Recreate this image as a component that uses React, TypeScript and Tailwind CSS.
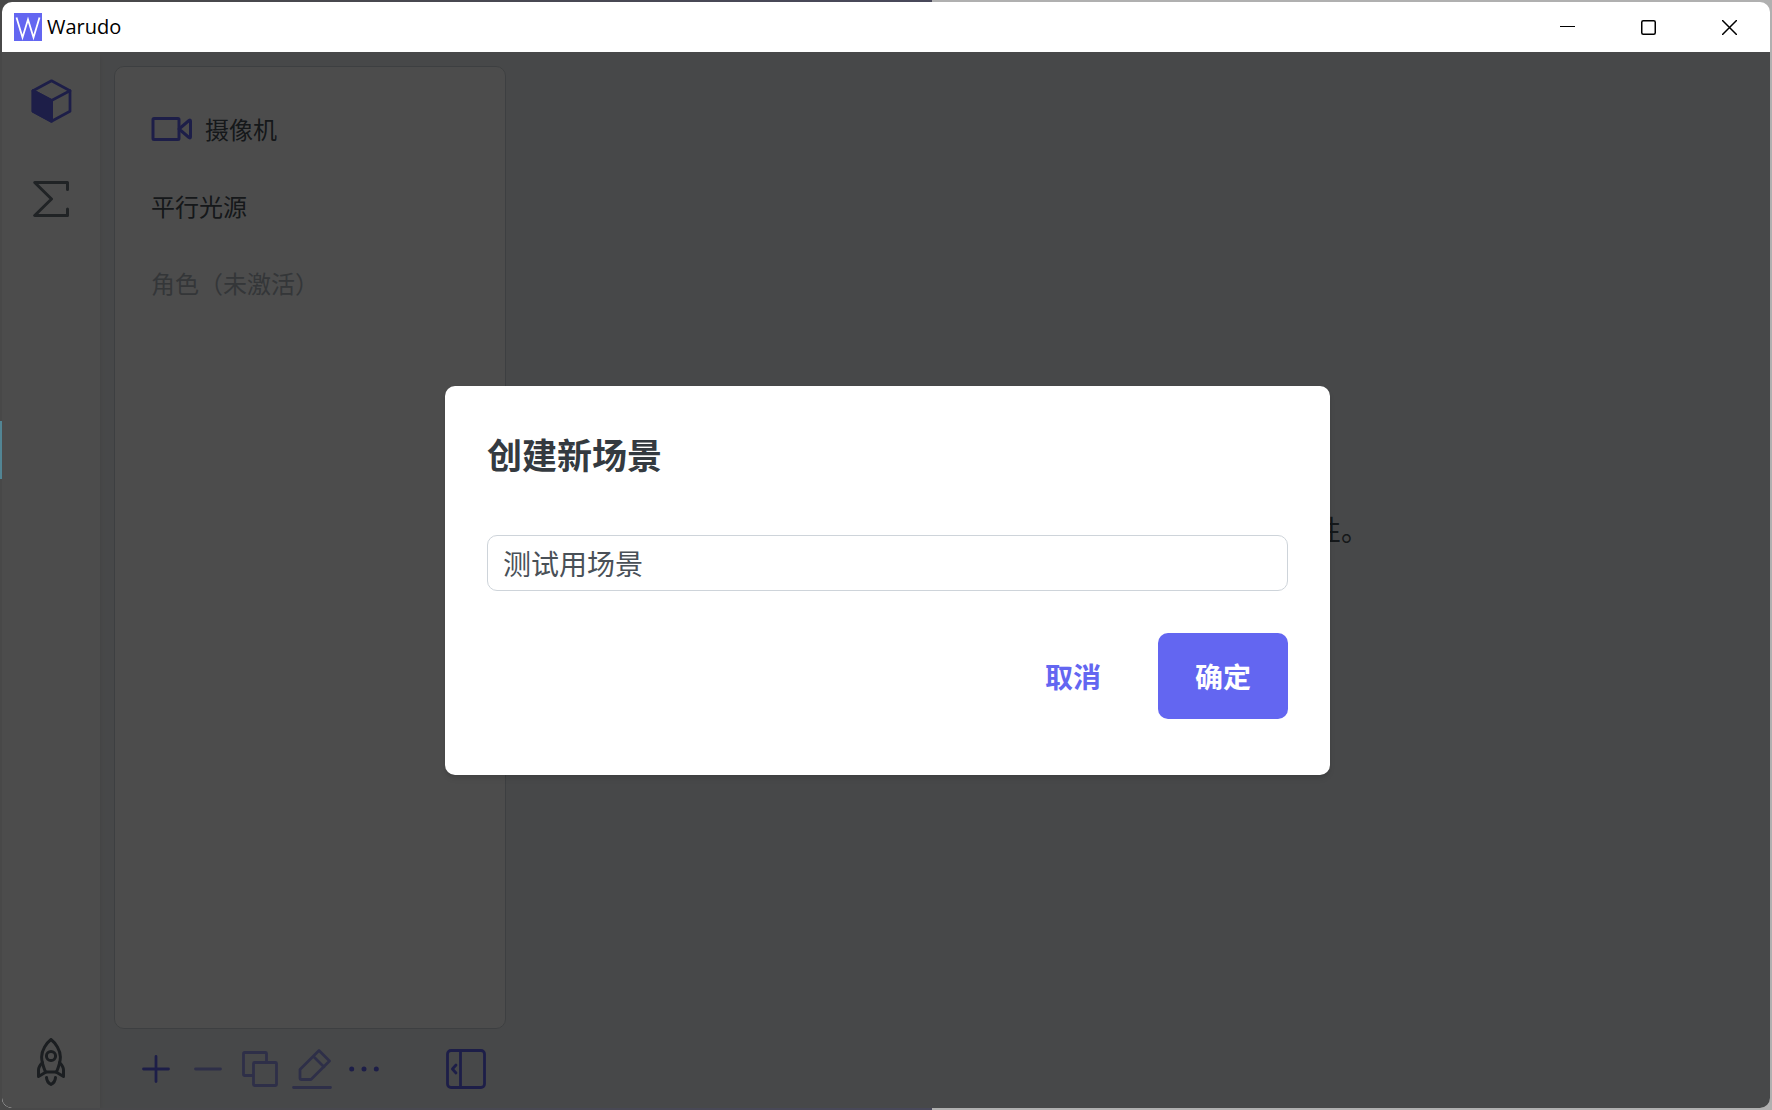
import { useState, type ReactNode } from "react";

function Icon({ box, className, width = 2, children }: { box: string; className: string; width?: number; children: ReactNode }) {
  return (
    <svg viewBox={box} className={className} fill="none" stroke="currentColor" strokeWidth={width} strokeLinecap="round" strokeLinejoin="round" aria-hidden="true">
      {children}
    </svg>
  );
}

function TitleBar() {
  return (
    <header className="flex h-[50px] shrink-0 items-center bg-white pl-3 text-black">
      <svg viewBox="0 0 28 28" className="size-7" aria-hidden="true">
        <rect width="28" height="28" fill="#6366f1" />
        <path d="M2.5 4.5 8.5 24.5 14 6.5 19.5 24.5 25.5 4.5" fill="none" stroke="#fff" strokeWidth="1.8" />
      </svg>
      <h1 className="ml-[5px] flex-1 font-['Open_Sans','Noto_Sans',sans-serif] text-xl">Warudo</h1>
      <button type="button" aria-label="最小化" className="flex h-full w-[81px] items-center justify-center">
        <Icon box="0 0 15 15" className="size-[15px]" width={1.2}><path d="M0 6.5h15" /></Icon>
      </button>
      <button type="button" aria-label="最大化" className="flex h-full w-[81px] items-center justify-center">
        <Icon box="0 0 15 15" className="size-[15px]" width={1.5}><rect x=".75" y=".75" width="13.5" height="13.5" rx="1.5" /></Icon>
      </button>
      <button type="button" aria-label="关闭" className="flex h-full w-[81px] items-center justify-center">
        <Icon box="0 0 15 15" className="size-[15px]" width={1.5}><path d="M.5.5l14 14M14.5.5l-14 14" /></Icon>
      </button>
    </header>
  );
}

function Sidebar() {
  return (
    <nav className="flex w-[98px] shrink-0 flex-col items-center bg-white pt-[27px] pb-[22px] text-[#6c757d] shadow-md">
      <button type="button" aria-label="资源" className="text-[#6366f1]">
        <Icon box="0 0 42 44" className="h-11 w-[42px]" width={2.8}>
          <path d="M21.5 1.8 40 11.8V32.2L21.5 42.2 3 32.2V11.8Z" />
          <path d="M3 11.8 21.5 21.5 40 11.8M21.5 21.5V42" />
          <path d="M3 11.8 21.5 21.5V42.2L3 32.2Z" fill="currentColor" />
        </Icon>
      </button>
      <button type="button" aria-label="蓝图" className="mt-[58px]">
        <Icon box="0 0 36 36" className="size-9" width={3}>
          <path d="M34.5 8.5V1.5H1.7L18.5 18 1.7 34.5H34.5V28" />
        </Icon>
      </button>
      <button type="button" aria-label="启动" className="mt-auto text-[#5c666e]">
        <Icon box="0 0 28 48" className="h-12 w-7" width={3}>
          <path d="M8.5 34C6 28 4.600 24 4.600 19C4.600 12 9.500 5 14 1.500C18.500 5 23.400 12 23.400 19C23.400 24 22 28 19.500 34Z" />
          <circle cx="14" cy="18" r="4.600" />
          <path d="M5.500 24.500C3 27 1.500 29.500 1.500 32V38.500L9 34M22.500 24.500C25 27 26.500 29.500 26.500 32V38.500L19 34" />
          <path d="M9.500 39.500C9.800 43 12 45.500 14 46.500C16 45.500 18.200 43 18.500 39.500" />
        </Icon>
      </button>
    </nav>
  );
}

function AssetPanel() {
  return (
    <section className="flex w-[392px] shrink-0 flex-col">
      <ul className="flex min-h-0 flex-1 flex-col gap-[41px] rounded-[10px] border border-[#ced4da] bg-white px-9 pt-11 text-2xl leading-9 text-[#495057]">
        <li className="flex items-center gap-3">
          <Icon box="0 0 42 24" className="h-6 w-[42px] text-[#6366f1]" width={3}>
            <rect x="2" y="1.500" width="26" height="21" rx="1" />
            <path d="M28 12 38 3.500Q39.500 2.500 39.500 4V20Q39.500 21.500 38 20.500Z" />
          </Icon>
          <span>摄像机</span>
        </li>
        <li>平行光源</li>
        <li className="text-[#adb5bd]">角色（未激活）</li>
      </ul>
      <div className="flex h-[79px] shrink-0 items-center pl-4 text-[#6366f1]">
        <button type="button" aria-label="添加" className="flex w-[52px] justify-center"><Icon box="0 0 28 28" className="size-7 shrink-0" width={2.800}><path d="M14 1.500v25M1.500 14h25" /></Icon></button>
        <button type="button" aria-label="删除" className="flex w-[52px] justify-center opacity-60"><Icon box="0 0 28 28" className="size-7 shrink-0" width={2.800}><path d="M1.500 14h25" /></Icon></button>
        <button type="button" aria-label="复制" className="flex w-[52px] justify-center opacity-60">
          <Icon box="0 0 36 36" className="size-9 shrink-0" width={2.800}>
            <rect x="11.500" y="11.500" width="23" height="23" rx="1" />
            <path d="M11 24.500H2.500q-1 0-1-1V2.500q0-1 1-1H23.500q1 0 1 1V11" />
          </Icon>
        </button>
        <button type="button" aria-label="重命名" className="flex w-[52px] justify-center opacity-60">
          <Icon box="0 0 40 40" className="size-10 shrink-0" width={2.800}>
            <path d="M1.500 38.500h37M27 1.500 37.500 12 19 30.500H9q-1 0-1-1V20.500ZM21.500 7.500 32 18" />
          </Icon>
        </button>
        <button type="button" aria-label="更多" className="flex w-[52px] justify-center">
          <Icon box="0 0 32 8" className="h-2 w-8 shrink-0" width={5}><path d="M3.700 4h.01M16 4h.01M28.300 4h.01" /></Icon>
        </button>
        <button type="button" aria-label="收起面板" className="mr-5 ml-auto">
          <Icon box="0 0 40 40" className="size-10" width={2.800}>
            <rect x="1.500" y="1.500" width="37" height="37" rx="3.500" />
            <path d="M14.500 2v36" />
            <path d="m10 16-3.600 4 3.600 4" />
          </Icon>
        </button>
      </div>
    </section>
  );
}

function CreateSceneDialog() {
  const [name, setName] = useState("测试用场景");
  return (
    <div className="absolute inset-0 flex items-center justify-center bg-black/70 pl-[3px]">
      <form role="dialog" aria-labelledby="scene-title" onSubmit={(e) => e.preventDefault()} className="w-full max-w-[885px] rounded-[10px] bg-white px-[42px] pt-[46px] pb-14 shadow-md">
        <h2 id="scene-title" className="text-[35px] leading-[44px] font-bold text-[#343a40]">创建新场景</h2>
        <input aria-labelledby="scene-title" value={name} onChange={(e) => setName(e.target.value)} className="mt-[59px] block h-14 w-full rounded-[10px] border border-[#ced4da] px-[15px] text-[28px] text-[#495057] outline-none" />
        <div className="mt-[42px] flex justify-end gap-5 text-[28px] font-bold">
          <button type="button" className="h-[86px] rounded-[10px] px-[37px] text-[#6366f1]">取消</button>
          <button type="submit" className="h-[86px] rounded-[10px] bg-[#6366f1] px-[37px] text-white">确定</button>
        </div>
      </form>
    </div>
  );
}

export default function App() {
  return (
    <div className="relative h-screen bg-[linear-gradient(90deg,#484848_0px,#48485a_932px,#b0b0b0_932px)] p-[2px] font-['Noto_Sans_CJK_SC',sans-serif]">
      <div className="absolute top-[421px] left-0 h-[58px] w-[2px] bg-[#528594]" />
      <div className="flex h-full flex-col overflow-hidden rounded-[10px]">
        <TitleBar />
        <div className="relative flex min-h-0 flex-1 bg-[#eff1f3]">
          <Sidebar />
          <div className="flex min-w-0 flex-1 gap-[14px] pt-[14px] pl-[14px]">
            <AssetPanel />
            <main className="flex min-w-0 flex-1 items-center justify-center">
              <p className="mb-[116px] text-[28px] leading-[42px] text-[#495057]">请选择一个资源来查看编辑其属性。</p>
            </main>
          </div>
          <CreateSceneDialog />
        </div>
      </div>
    </div>
  );
}
